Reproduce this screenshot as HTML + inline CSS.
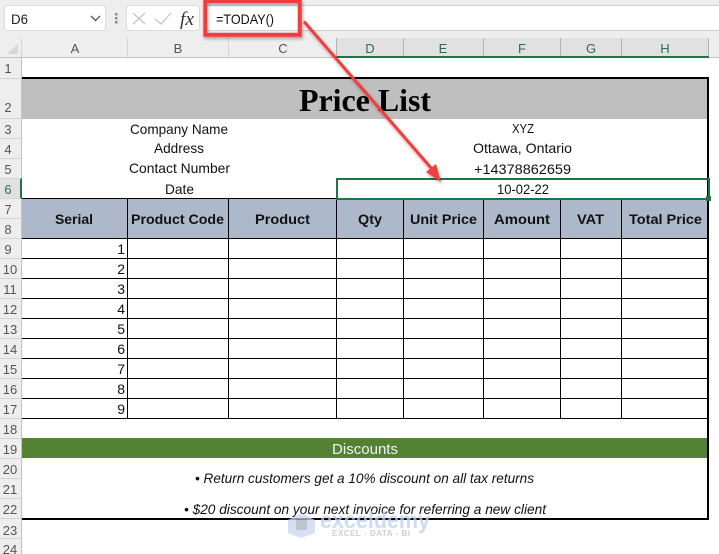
<!DOCTYPE html>
<html><head><meta charset="utf-8"><style>
html,body{margin:0;padding:0;background:#fff;width:719px;height:554px;overflow:hidden}
svg{display:block}
text{font-family:"Liberation Sans",sans-serif}
.c{font-size:14px;fill:#111}
.h{font-size:13.5px;font-weight:bold;fill:#111}
.r{font-size:13px;fill:#555;text-anchor:middle}
.ch{font-size:13px;fill:#555;text-anchor:middle}
.chg{font-size:13px;fill:#2a6e4a;text-anchor:middle}
.i{font-size:14px;font-style:italic;fill:#111}
.n{font-size:14px;fill:#111;text-anchor:end}
</style></head><body>
<svg width="719" height="554" viewBox="0 0 719 554" xmlns="http://www.w3.org/2000/svg">
<defs><filter id="s" x="-20%" y="-20%" width="140%" height="140%"><feDropShadow dx="1" dy="2" stdDeviation="1.5" flood-color="#000" flood-opacity=".35"/></filter></defs>
<rect width="719" height="554" fill="#fff"/>
<!-- ribbon -->
<rect width="719" height="58" fill="#eeeeee"/>
<rect x="205" y="5" width="514" height="1" fill="#d0d0d0"/>
<rect x="205" y="6" width="514" height="24" fill="#fff"/>
<rect x="205" y="30" width="514" height="1" fill="#d0d0d0"/>
<rect x="4.5" y="5.5" width="101" height="25" rx="3" fill="#fff" stroke="#dcdcdc"/>
<text x="11" y="24" font-size="14" fill="#222" textLength="17" lengthAdjust="spacingAndGlyphs">D6</text>
<path d="M91 16l4.500 4.500 4.500-4.500" fill="none" stroke="#555" stroke-width="1.300"/>
<rect x="115" y="13" width="2.500" height="2.500" fill="#8a8a8a"/><rect x="115" y="17" width="2.500" height="2.500" fill="#8a8a8a"/><rect x="115" y="21" width="2.500" height="2.500" fill="#8a8a8a"/>
<rect x="126.500" y="5.500" width="73" height="25" rx="3" fill="#fff" stroke="#dcdcdc"/>
<path d="M133 13l12 11M145 13l-12 11" stroke="#c4c4c4" stroke-width="1.200" fill="none"/>
<path d="M155 19l6 5 10-11" stroke="#c4c4c4" stroke-width="1.200" fill="none"/>
<text x="180" y="25" font-size="19" font-style="italic" fill="#333" textLength="14" lengthAdjust="spacingAndGlyphs" style="font-family:'Liberation Serif',serif">fx</text>
<text x="216" y="24" font-size="14" fill="#111" textLength="58" lengthAdjust="spacingAndGlyphs">=TODAY()</text>
<!-- column header -->
<rect x="0" y="38" width="719" height="19" fill="#eeeeee"/>
<rect x="336" y="38" width="373" height="19" fill="#e1e1e1"/>
<rect x="0" y="57" width="719" height="1" fill="#c4c4c4"/>
<rect x="336" y="56" width="373" height="2" fill="#217346"/>
<path d="M7 54L18 54L18 44Z" fill="#d8d8d8"/>
<g fill="#d4d4d4"><rect x="21" y="38" width="1" height="19"/><rect x="127" y="38" width="1" height="19"/><rect x="228" y="38" width="1" height="19"/></g>
<g fill="#b4b4b4"><rect x="336" y="38" width="1" height="18"/><rect x="403" y="38" width="1" height="18"/><rect x="483" y="38" width="1" height="18"/><rect x="560" y="38" width="1" height="18"/><rect x="621" y="38" width="1" height="18"/><rect x="708" y="38" width="1" height="18"/></g>
<text class="ch" x="75" y="53">A</text><text class="ch" x="178" y="53">B</text><text class="ch" x="283" y="53">C</text>
<text class="chg" x="370" y="53">D</text><text class="chg" x="443" y="53">E</text><text class="chg" x="522" y="53">F</text><text class="chg" x="591" y="53">G</text><text class="chg" x="665" y="53">H</text>
<!-- row header -->
<rect x="0" y="58" width="21" height="496" fill="#eeeeee"/>
<rect x="21" y="58" width="1" height="496" fill="#c4c4c4"/>
<rect x="0" y="178" width="21" height="21" fill="#e1e1e1"/>
<rect x="20" y="178" width="2" height="21" fill="#217346"/>
<g fill="#d4d4d4">
<rect y="78" width="21" height="1"/><rect y="118" width="21" height="1"/><rect y="138" width="21" height="1"/><rect y="158" width="21" height="1"/><rect y="178" width="21" height="1"/><rect y="198" width="21" height="1"/><rect y="218" width="21" height="1"/><rect y="238" width="21" height="1"/><rect y="258" width="21" height="1"/><rect y="278" width="21" height="1"/><rect y="298" width="21" height="1"/><rect y="318" width="21" height="1"/><rect y="338" width="21" height="1"/><rect y="358" width="21" height="1"/><rect y="378" width="21" height="1"/><rect y="398" width="21" height="1"/><rect y="418" width="21" height="1"/><rect y="438" width="21" height="1"/><rect y="458" width="21" height="1"/><rect y="478" width="21" height="1"/><rect y="498" width="21" height="1"/><rect y="518" width="21" height="1"/><rect y="538" width="21" height="1"/>
</g>
<text class="r" x="8" y="73">1</text><text class="r" x="8" y="112">2</text><text class="r" x="8" y="134">3</text><text class="r" x="8" y="154">4</text><text class="r" x="8" y="174">5</text><text class="r" x="8" y="194" style="fill:#2a6e4a">6</text><text class="r" x="8" y="214">7</text><text class="r" x="8" y="234">8</text><text class="r" x="8" y="254">9</text>
<text class="r" x="10" y="274">10</text><text class="r" x="10" y="294">11</text><text class="r" x="10" y="314">12</text><text class="r" x="10" y="334">13</text><text class="r" x="10" y="354">14</text><text class="r" x="10" y="374">15</text><text class="r" x="10" y="394">16</text><text class="r" x="10" y="414">17</text><text class="r" x="10" y="434">18</text><text class="r" x="10" y="454">19</text><text class="r" x="10" y="474">20</text><text class="r" x="10" y="494">21</text><text class="r" x="10" y="514">22</text><text class="r" x="10" y="535">23</text><text class="r" x="10" y="554">24</text>
<!-- title -->
<rect x="22" y="79" width="686" height="40" fill="#bfbfbf"/>
<text x="299" y="111" font-size="32" font-weight="bold" fill="#000" textLength="132" lengthAdjust="spacingAndGlyphs" style="font-family:'Liberation Serif',serif">Price List</text>
<!-- info -->
<text class="c" x="130" y="134" textLength="98" lengthAdjust="spacingAndGlyphs">Company Name</text>
<text class="c" x="154" y="153" textLength="50" lengthAdjust="spacingAndGlyphs">Address</text>
<text class="c" x="129" y="173" textLength="101" lengthAdjust="spacingAndGlyphs">Contact Number</text>
<text class="c" x="165" y="194" textLength="29" lengthAdjust="spacingAndGlyphs">Date</text>
<text x="512" y="133" font-size="13" fill="#111" textLength="22" lengthAdjust="spacingAndGlyphs">XYZ</text>
<text class="c" x="473" y="153" textLength="99" lengthAdjust="spacingAndGlyphs">Ottawa, Ontario</text>
<text class="c" x="474" y="174" textLength="97" lengthAdjust="spacingAndGlyphs">+14378862659</text>
<text class="c" x="497" y="194" textLength="52" lengthAdjust="spacingAndGlyphs">10-02-22</text>
<!-- table header -->
<rect x="22" y="199" width="686" height="39" fill="#adb9ca"/>
<text class="h" x="55" y="224" textLength="38" lengthAdjust="spacingAndGlyphs">Serial</text>
<text class="h" x="131" y="224" textLength="93" lengthAdjust="spacingAndGlyphs">Product Code</text>
<text class="h" x="255" y="224" textLength="55" lengthAdjust="spacingAndGlyphs">Product</text>
<text class="h" x="358" y="224" textLength="24" lengthAdjust="spacingAndGlyphs">Qty</text>
<text class="h" x="410" y="224" textLength="67" lengthAdjust="spacingAndGlyphs">Unit Price</text>
<text class="h" x="494" y="224" textLength="56" lengthAdjust="spacingAndGlyphs">Amount</text>
<text class="h" x="577" y="224" textLength="27" lengthAdjust="spacingAndGlyphs">VAT</text>
<text class="h" x="629" y="224" textLength="73" lengthAdjust="spacingAndGlyphs">Total Price</text>
<!-- grid -->
<g fill="#000">
<rect x="22" y="198" width="686" height="1"/><rect x="22" y="238" width="686" height="1"/><rect x="22" y="258" width="686" height="1"/><rect x="22" y="278" width="686" height="1"/><rect x="22" y="298" width="686" height="1"/><rect x="22" y="318" width="686" height="1"/><rect x="22" y="338" width="686" height="1"/><rect x="22" y="358" width="686" height="1"/><rect x="22" y="378" width="686" height="1"/><rect x="22" y="398" width="686" height="1"/><rect x="22" y="418" width="686" height="1"/>
<rect x="127" y="198" width="1" height="220"/><rect x="228" y="198" width="1" height="220"/><rect x="336" y="198" width="1" height="220"/><rect x="403" y="198" width="1" height="220"/><rect x="483" y="198" width="1" height="220"/><rect x="560" y="198" width="1" height="220"/><rect x="621" y="198" width="1" height="220"/>
</g>
<text class="n" x="125" y="254">1</text><text class="n" x="125" y="274">2</text><text class="n" x="125" y="294">3</text><text class="n" x="125" y="314">4</text><text class="n" x="125" y="334">5</text><text class="n" x="125" y="354">6</text><text class="n" x="125" y="374">7</text><text class="n" x="125" y="394">8</text><text class="n" x="125" y="414">9</text>
<!-- discounts -->
<rect x="22" y="438" width="685" height="20" fill="#548235"/>
<text x="332" y="454" font-size="15" fill="#f2f2f2" textLength="66" lengthAdjust="spacingAndGlyphs">Discounts</text>
<text class="i" x="195" y="483" textLength="339" lengthAdjust="spacingAndGlyphs">• Return customers get a 10% discount on all tax returns</text>
<text class="i" x="184" y="514" textLength="362" lengthAdjust="spacingAndGlyphs">• $20 discount on your next invoice for referring a new client</text>
<!-- outer border -->
<rect x="22" y="77" width="687" height="2" fill="#000"/>
<rect x="707" y="77" width="2" height="443" fill="#000"/>
<rect x="22" y="518" width="687" height="2" fill="#000"/>
<!-- selection -->
<g fill="#217346">
<rect x="336" y="178" width="374" height="2"/>
<rect x="336" y="198" width="374" height="2"/>
<rect x="336" y="178" width="2" height="22"/>
<rect x="708" y="178" width="2" height="22"/>
</g>
<rect x="706" y="196" width="5" height="5" fill="#217346"/>
<!-- watermark -->
<g opacity=".75">
<path d="M288 520L301 513L315 520V533L301 538L288 533Z" fill="#c9d6ee"/>
<path d="M296 519L307 519L307 530L296 530Z" fill="#aab3c4"/>
<text x="320" y="528" font-size="23" font-weight="bold" fill="#bdd0f0" textLength="110" lengthAdjust="spacingAndGlyphs">exceldemy</text>
<text x="332" y="536" font-size="8" font-weight="bold" fill="#c0c0c0" textLength="78" lengthAdjust="spacing">EXCEL - DATA - BI</text>
</g>
<!-- annotation -->
<g filter="url(#s)">
<rect x="205.300" y="1" width="94.500" height="33.800" fill="none" stroke="#f33c3c" stroke-width="4"/>
<path d="M304 21.500L432 169" stroke="#f33c3c" stroke-width="3" fill="none"/>
<path d="M441 182L426 172L436 164Z" fill="#f33c3c"/>
</g>
</svg>
</body></html>
